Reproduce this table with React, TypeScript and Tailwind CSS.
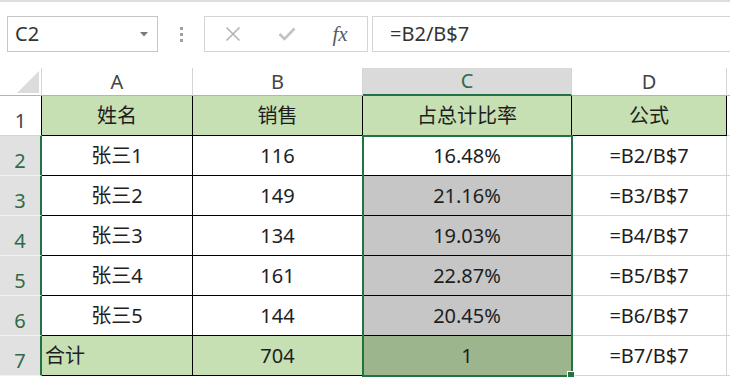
import React from "react";

const rowsData: string[][] = [
  ["姓名", "销售", "占总计比率", "公式"],
  ["张三1", "116", "16.48%", "=B2/B$7"],
  ["张三2", "149", "21.16%", "=B3/B$7"],
  ["张三3", "134", "19.03%", "=B4/B$7"],
  ["张三4", "161", "22.87%", "=B5/B$7"],
  ["张三5", "144", "20.45%", "=B6/B$7"],
  ["合计", "704", "1", "=B7/B$7"],
];

function cellClass(r: number, c: number): string {
  // r: 1..7, c: 0..3
  const base = "flex items-center text-[20px] text-[#1e1e1e] ";
  if (r === 1) {
    return base + "justify-center bg-[#c6e0b4] border-r border-b border-black";
  }
  if (c === 0) {
    if (r === 7) return base + "justify-start pl-[3px] bg-[#c6e0b4] border-r border-b border-black";
    return base + "justify-center bg-white border-r border-b border-black";
  }
  if (c === 1) {
    if (r === 7) return base + "justify-center bg-[#c6e0b4] border-r border-b border-black";
    return base + "justify-center bg-white border-r border-b border-black";
  }
  if (c === 2) {
    if (r === 2) return base + "justify-center bg-white border-r border-b border-black";
    if (r === 7) return base + "justify-center bg-[#9db58d] border-r border-b border-black";
    return base + "justify-center bg-[#c6c6c6] border-r border-b border-black";
  }
  return base + "justify-center bg-white border-r border-b border-[#d4d4d4]";
}

export default function App() {
  return (
    <div className="w-[730px] h-[377px] overflow-hidden bg-white flex flex-col [font-family:'Noto_Sans','Noto_Sans_CJK_SC',sans-serif]">
      <div className="h-[2px] bg-[#dedede]" />
      {/* toolbar */}
      <div className="mt-[14px] h-[36px] flex items-stretch">
        <div className="ml-[7px] w-[151px] border border-[#c6c6c6] flex items-center justify-between pl-[7px] pr-[9px]">
          <span className="text-[20px] text-[#333] leading-none">C2</span>
          <svg width="8" height="5" viewBox="0 0 8 5">
            <polygon points="0,0 8,0 4,4.5" fill="#7a7a7a" />
          </svg>
        </div>
        <div className="w-[46px] flex flex-col items-center justify-center gap-[3px]">
          <div className="w-[3px] h-[3px] bg-[#a0a0a0]" />
          <div className="w-[3px] h-[3px] bg-[#a0a0a0]" />
          <div className="w-[3px] h-[3px] bg-[#a0a0a0]" />
        </div>
        <div className="w-[164px] border border-[#d4d4d4] flex items-center">
          <div className="w-[56px] flex justify-center">
            <svg width="16" height="16" viewBox="0 0 16 16">
              <path d="M1.5 1.5 L14.5 14.5 M14.5 1.5 L1.5 14.5" stroke="#b4b4b4" strokeWidth="1.6" fill="none" />
            </svg>
          </div>
          <div className="w-[52px] flex justify-center">
            <svg width="18" height="14" viewBox="0 0 18 14">
              <path d="M1.5 7 L6.5 12 L16.5 1.5" stroke="#c2c2c2" strokeWidth="2.6" fill="none" />
            </svg>
          </div>
          <div className="w-[54px] flex justify-center">
            <span className="[font-family:'Liberation_Serif',serif] italic text-[21px] text-[#5a5a5a] leading-none">fx</span>
          </div>
        </div>
        <div className="ml-[4px] flex-1 border-y border-l border-[#d4d4d4] flex items-center pl-[17px]">
          <span className="text-[20px] text-[#333] leading-none">=B2/B$7</span>
        </div>
      </div>
      {/* sheet */}
      <div className="relative mt-[16px]">
        <div className="grid grid-cols-[42px_151px_170px_209px_155px_3px] grid-rows-[28px_repeat(7,40px)]">
          {/* header row */}
          <div className="relative bg-white border-r border-r-[#d4d4d4] border-b border-b-[#b4b4b4]">
            <svg className="absolute right-[2px] bottom-[2px]" width="22" height="22" viewBox="0 0 22 22">
              <polygon points="0,22 22,22 22,0" fill="#dcdcdc" />
            </svg>
          </div>
          <div className="flex items-center justify-center text-[20px] text-[#444] bg-white border-r border-r-[#d4d4d4] border-b border-b-[#b4b4b4]">A</div>
          <div className="flex items-center justify-center text-[20px] text-[#444] bg-white border-r border-r-[#d4d4d4] border-b border-b-[#b4b4b4]">B</div>
          <div className="flex items-center justify-center text-[20px] text-[#2f6b4a] bg-[#dadada] border-r border-r-[#d4d4d4] border-b-2 border-b-[#217346]">C</div>
          <div className="flex items-center justify-center text-[20px] text-[#444] bg-white border-r border-r-[#d4d4d4] border-b border-b-[#b4b4b4]">D</div>
          <div className="bg-white border-b border-b-[#b4b4b4]" />
          {rowsData.map((row, i) => {
            const r = i + 1;
            return (
              <React.Fragment key={r}>
                {r === 1 ? (
                  <div className="flex items-center justify-center pt-[11px] text-[20px] text-[#444] bg-white border-r border-r-black border-b border-b-[#d4d4d4]">
                    {r}
                  </div>
                ) : (
                  <div className="flex items-center justify-center pt-[11px] text-[20px] text-[#2f6b4a] bg-[#e1e1e1] border-r-2 border-r-[#217346] border-b border-b-[#f2f2f2]">
                    {r}
                  </div>
                )}
                {row.map((v, c) => (
                  <div key={c} className={cellClass(r, c)}>
                    {v}
                  </div>
                ))}
                <div className="bg-white border-b border-b-[#d4d4d4]" />
              </React.Fragment>
            );
          })}
        </div>
        {/* selection */}
        <div className="absolute left-[362px] top-[67px] w-[211px] h-[242px] border-2 border-[#217346] pointer-events-none" />
        <div className="absolute left-[567px] top-[303px] w-[8px] h-[8px] bg-[#217346] border border-white" />
      </div>
    </div>
  );
}
